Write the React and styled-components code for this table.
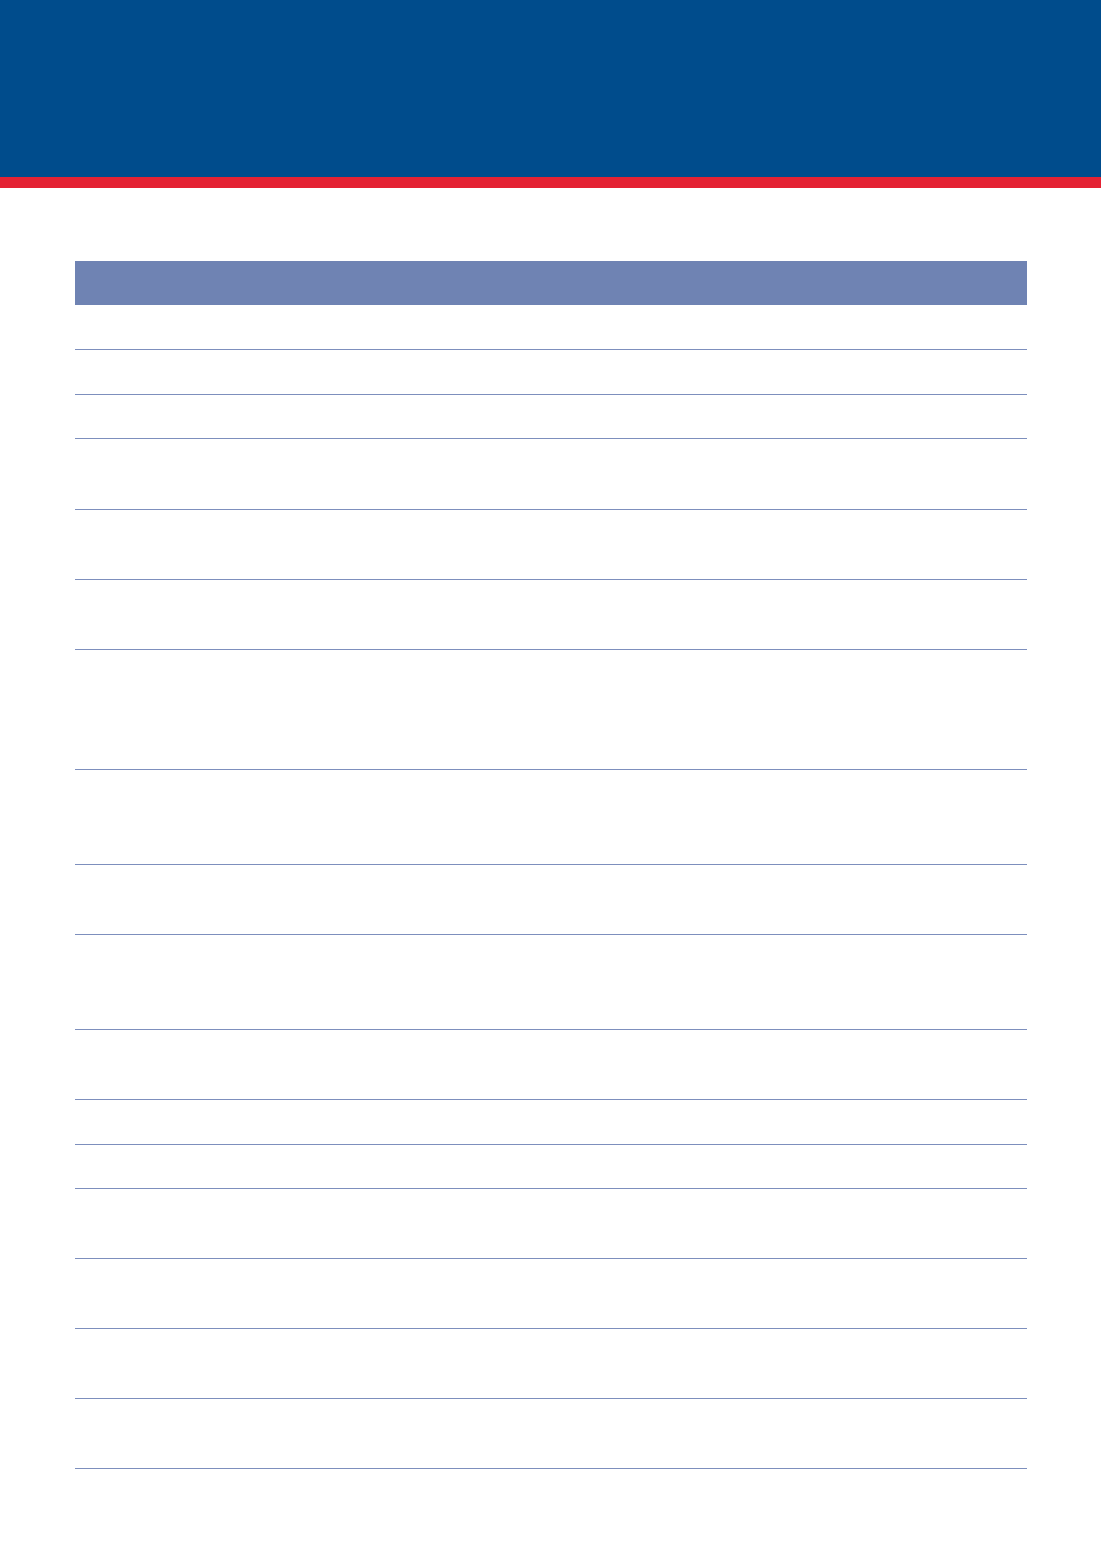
import React from 'react'
import styled, { createGlobalStyle } from 'styled-components'

const GlobalStyle = createGlobalStyle`
  html, body {
    margin: 0;
    padding: 0;
    background: #ffffff;
    font-family: "Liberation Sans", Arial, sans-serif;
  }
`

const Page = styled.div`
  width: 1101px;
  min-height: 1562px;
  background: #ffffff;
`

const Banner = styled.header`
  height: 177px;
  background: #004c8c;
  border-bottom: 11px solid #e42233;
`

const Table = styled.div`
  margin: 73px 0 0 75px;
  width: 952px;
  display: flex;
  flex-direction: column;
`

const HeadRow = styled.div`
  height: 44px;
  background: #6f83b3;
`

const Row = styled.div`
  height: ${p => p.$h - 1}px;
  border-bottom: 1px solid #7d8fbd;
`

const App = () => {
  const rows = [45, 45, 44, 71, 70, 70, 120, 95, 70, 95, 70, 45, 44, 70, 70, 70, 70]

  return (
    <Page>
      <GlobalStyle />
      <Banner />
      <Table>
        <HeadRow />
        {rows.map((h, index) => (
          <Row key={index} $h={h} />
        ))}
      </Table>
    </Page>
  )
}

export default App
